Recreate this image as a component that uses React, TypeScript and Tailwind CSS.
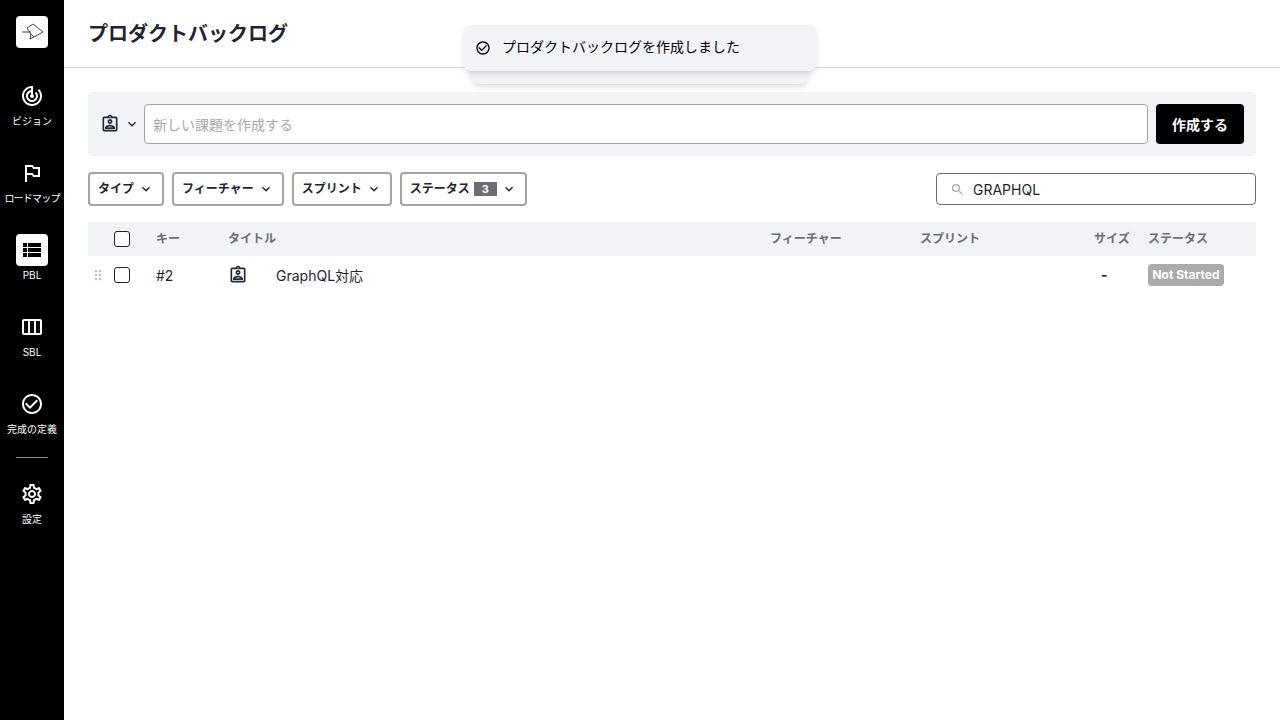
import type { ReactNode } from "react"
import {
  MdCheckCircleOutline,
  MdDragIndicator,
  MdKeyboardArrowDown,
  MdOutlineAssignmentInd,
  MdOutlinedFlag,
  MdOutlineSettings,
  MdOutlineViewWeek,
  MdSearch,
  MdTrackChanges,
  MdViewList,
} from "react-icons/md"

const font = "font-['Inter','Noto_Sans_CJK_JP',sans-serif]"

function Logo() {
  return (
    <svg viewBox="0 0 32 32" className="h-8 w-8" fill="none" stroke="#444" strokeWidth="1">
      <path d="M6 16h9M11 12l6-4 10 8-9 5-4 2 1-5-4-6M15 18l3 3" />
    </svg>
  )
}

function NavItem({ label, icon, active, tight }: { label: string; icon: ReactNode; active?: boolean; tight?: boolean }) {
  return (
    <div className="flex h-[72px] flex-col items-center pt-[3px]">
      <div className={"flex h-8 w-8 items-center justify-center rounded " + (active ? "bg-white" : "")}>{icon}</div>
      <span className={"mt-[2px] whitespace-nowrap text-[10px] leading-[15px] text-white " + (tight ? "tracking-[-0.8px]" : "")}>{label}</span>
    </div>
  )
}

function Filter({ label, count }: { label: string; count?: number }) {
  return (
    <button className="flex h-[34px] items-center rounded border-2 border-[#a3a3a3] bg-white pl-2 pr-2 text-xs font-bold text-[#1f2430]">
      {label}
      {count && <span className="ml-1 flex h-[14px] w-[23px] items-center justify-center bg-[#6b6e72] text-[11px] text-white">{count}</span>}
      <MdKeyboardArrowDown className="ml-1 h-4 w-4" />
    </button>
  )
}

export default function App() {
  return (
    <div className={"relative flex h-[720px] w-[1280px] overflow-hidden bg-white " + font}>
      <aside className="flex w-16 shrink-0 flex-col items-center bg-black pt-4">
        <div className="mb-[29px] flex h-8 w-8 items-center justify-center rounded bg-white"><Logo /></div>
        <div className="flex w-16 flex-col gap-[5px]">
          <NavItem label="ビジョン" icon={<MdTrackChanges className="h-6 w-6 text-white" />} />
          <NavItem label="ロードマップ" tight icon={<MdOutlinedFlag className="h-6 w-6 text-white" />} />
          <NavItem label="PBL" active icon={<MdViewList className="h-6 w-6 text-black" />} />
          <NavItem label="SBL" icon={<MdOutlineViewWeek className="h-6 w-6 text-white" />} />
          <NavItem label="完成の定義" icon={<MdCheckCircleOutline className="h-6 w-6 text-white" />} />
        </div>
        <div className="mb-[17px] h-px w-8 bg-[#8a8a8a]" />
        <NavItem label="設定" icon={<MdOutlineSettings className="h-6 w-6 text-white" />} />
      </aside>

      <main className="min-w-0 flex-1">
        <header className="flex h-[68px] items-center border-b border-[#d4d4d8] px-6">
          <h1 className="text-xl font-bold text-[#1f2430]">プロダクトバックログ</h1>
        </header>

        <div className="px-6 pt-6">
          <div className="flex h-16 items-center rounded bg-[#f2f3f7] px-3">
            <MdOutlineAssignmentInd className="h-5 w-5 text-[#1f2937]" />
            <MdKeyboardArrowDown className="ml-1 h-4 w-4 text-[#1f2937]" />
            <div className="ml-1 flex h-10 flex-1 items-center rounded border border-[#a3a3a3] bg-white px-2 pt-[1px] text-sm text-[#a8a8a8]">新しい課題を作成する</div>
            <button className="ml-2 h-10 w-[88px] rounded bg-black pt-[1px] text-sm font-bold text-white">作成する</button>
          </div>

          <div className="mt-4 flex items-center gap-2">
            <Filter label="タイプ" />
            <Filter label="フィーチャー" />
            <Filter label="スプリント" />
            <Filter label="ステータス" count={3} />
            <div className="ml-auto flex h-8 w-80 items-center rounded border border-[#6b6b6b] pl-[13px] pt-[1px] text-sm text-[#1f2430]">
              <MdSearch className="h-[15px] w-[15px] text-[#a8a8a8]" />
              <span className="ml-[8px]">GRAPHQL</span>
            </div>
          </div>

          <div className="mt-4 flex h-[34px] items-center bg-[#f2f3f7] text-xs font-semibold text-[#6b6e72]">
            <span className="ml-[26px] h-4 w-4 rounded-[3px] border border-[#1f2430] bg-white" />
            <span className="ml-[26px] w-[72px]">キー</span>
            <span className="w-[542px]">タイトル</span>
            <span className="w-[150px]">フィーチャー</span>
            <span className="w-[174px]">スプリント</span>
            <span className="w-[54px]">サイズ</span>
            <span>ステータス</span>
          </div>

          <div className="flex h-[38px] items-center text-sm text-[#1f2430]">
            <MdDragIndicator className="ml-[2px] h-4 w-4 shrink-0 text-[#c0c0c0]" />
            <span className="ml-[8px] h-4 w-4 rounded-[3px] border border-[#1f2430] bg-white" />
            <span className="ml-[26px] w-[72px] pt-[1px]">#2</span>
            <MdOutlineAssignmentInd className="h-5 w-5 text-[#1f2937]" />
            <span className="ml-[28px] w-[494px] pt-[1px]">GraphQL対応</span>
            <span className="w-[150px]" />
            <span className="w-[174px]" />
            <span className="w-[54px] pl-[7px] font-bold">-</span>
            <span className="flex h-[22px] w-[76px] items-center justify-center rounded-sm bg-[#ababab] text-xs font-bold text-white">Not Started</span>
          </div>
        </div>
      </main>

      {/* toast stack */}
      <div className="absolute left-[471px] top-[40px] h-11 w-[338px] rounded-lg bg-[#f2f3f7] shadow-md" />
      <div className="absolute left-[463px] top-[25px] flex h-[46px] w-[354px] items-center rounded-lg bg-[#f2f3f7] pl-3 text-sm text-black shadow-md">
        <MdCheckCircleOutline className="h-4 w-4" />
        <span className="ml-[11px] -translate-y-[1px]">プロダクトバックログを作成しました</span>
      </div>
    </div>
  )
}
